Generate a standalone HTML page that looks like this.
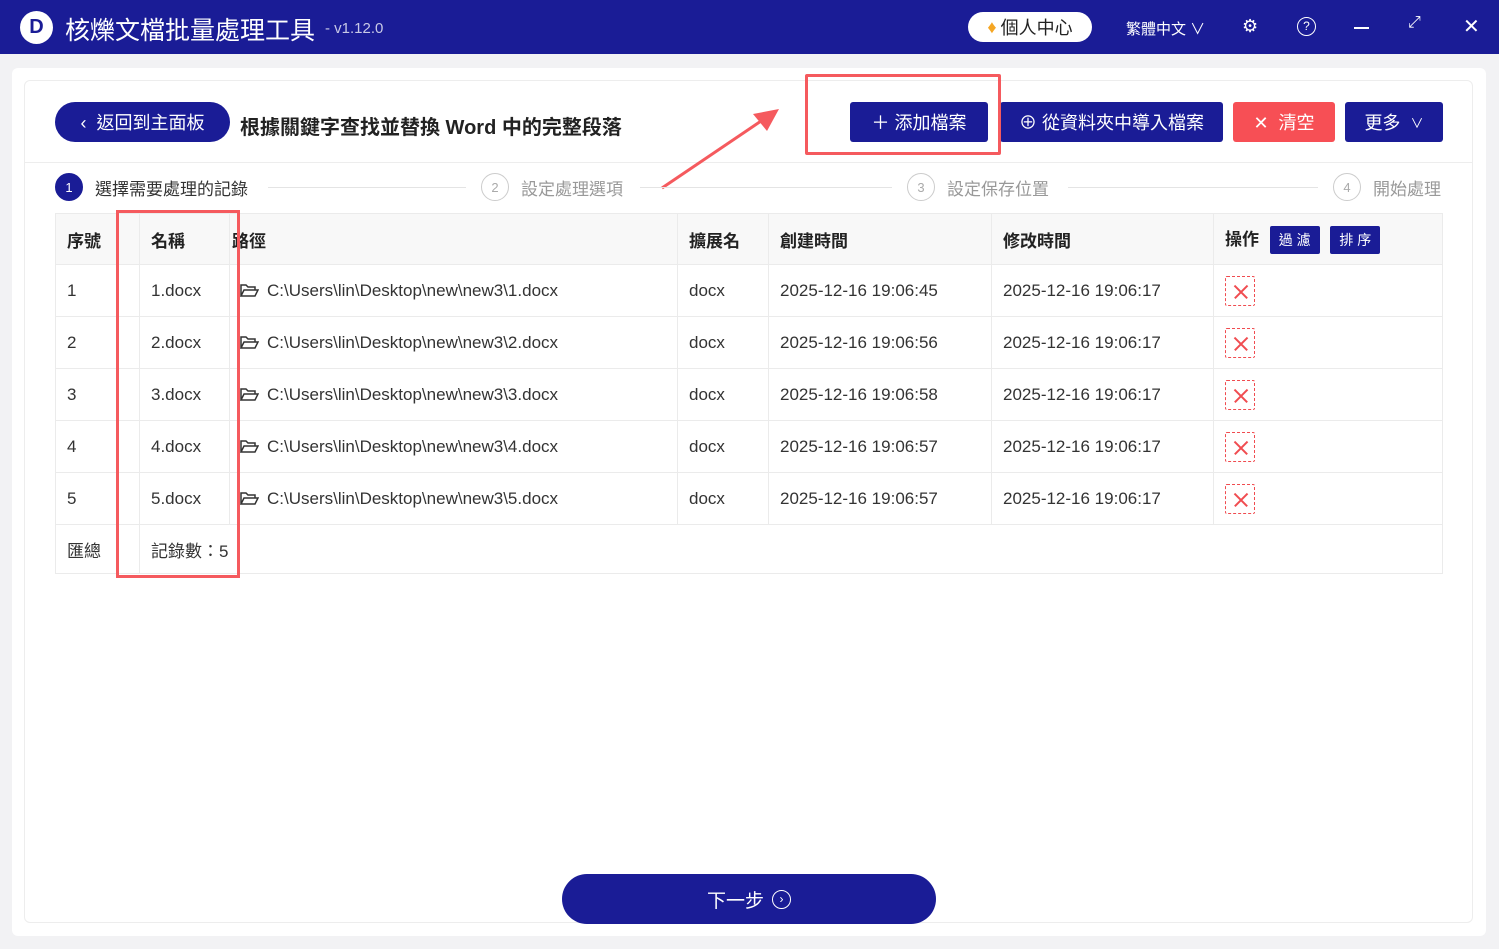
<!DOCTYPE html>
<html><head><meta charset="utf-8"><style>
*{margin:0;padding:0;box-sizing:border-box}
body{width:1499px;height:949px;background:#f2f2f4;font-family:"Liberation Sans","Noto Sans CJK TC",sans-serif;position:relative;overflow:hidden;color:#222}
.a{position:absolute}
.hdr{left:0;top:0;width:1499px;height:54px;background:#1a1c96}
.btn{position:absolute;height:40px;color:#fff;font-size:18px;display:flex;align-items:center;justify-content:center;border-radius:3px}
table{position:absolute;left:55px;top:213px;width:1388px;border-collapse:collapse;font-size:17px}
td{border:1px solid #ebebeb;padding-left:11px;height:52px;color:#333;vertical-align:middle}
tr.h td{background:#f8f8f8;font-weight:bold;height:51px;color:#222}
tr.f td{height:49px}
.x{display:inline-block;width:30px;height:30px;border:1px dashed #f04c50;border-radius:2px;position:relative;vertical-align:middle}
.x:before,.x:after{content:"";position:absolute;left:6px;top:14px;width:18px;height:1.5px;background:#f04c50;transform:rotate(45deg)}
.x:after{transform:rotate(-45deg)}
.step{position:absolute;top:173px;font-size:17px;color:#999;display:flex;align-items:center}
.c{width:28px;height:28px;border-radius:50%;border:1px solid #ccc;display:flex;align-items:center;justify-content:center;font-size:13px;color:#aaa;margin-right:12px}
.ln{position:absolute;top:187px;height:1px;background:#e4e4e4}
.p svg{vertical-align:-2px;margin-right:8px}
</style></head><body>
<div class="a hdr"></div>
<div class="a" style="left:20px;top:11px;width:33px;height:33px;border-radius:50%;background:#fff;display:flex;align-items:center;justify-content:center;color:#1a1c96;font-weight:bold;font-size:20px">D</div>
<div class="a" style="left:65px;top:11px;color:#fff;font-size:25px">核爍文檔批量處理工具</div>
<div class="a" style="left:325px;top:20px;color:#c8c9e6;font-size:15px">- v1.12.0</div>
<div class="a" style="left:968px;top:12px;width:124px;height:30px;border-radius:15px;background:#fff;display:flex;align-items:center;justify-content:center;font-size:18px;color:#222"><span style="color:#f5a623;margin-right:4px">♦</span>個人中心</div>
<div class="a" style="left:1126px;top:18px;color:#fff;font-size:15px">繁體中文 ∨</div>
<div class="a" style="left:1242px;top:16px;color:#fff;font-size:18px">⚙</div>
<div class="a" style="left:1297px;top:17px;width:19px;height:19px;border:1.5px solid #fff;border-radius:50%;color:#fff;font-size:12px;text-align:center;line-height:16px">?</div>
<div class="a" style="left:1354px;top:27px;width:15px;height:1.5px;background:#fff"></div>
<div class="a" style="left:1408px;top:14px;color:#fff;font-size:16px">⤢</div>
<div class="a" style="left:1463px;top:14px;color:#fff;font-size:20px">✕</div>

<div class="a" style="left:12px;top:68px;width:1474px;height:868px;background:#fff;border-radius:6px"></div>
<div class="a" style="left:24px;top:80px;width:1449px;height:843px;border:1px solid #ededed;border-radius:6px"></div>
<div class="a" style="left:25px;top:162px;width:1447px;height:1px;background:#ededed"></div>

<div class="btn" style="left:55px;top:102px;width:175px;border-radius:20px;background:#1a1c96">‹&nbsp;&nbsp;返回到主面板</div>
<div class="a" style="left:240px;top:111px;font-size:20px;font-weight:bold;color:#222">根據關鍵字查找並替換 Word 中的完整段落</div>
<div class="btn" style="left:850px;top:102px;width:138px;background:#1a1c96">＋&nbsp;添加檔案</div>
<div class="btn" style="left:1000px;top:102px;width:223px;background:#1a1c96">⊕&nbsp;從資料夾中導入檔案</div>
<div class="btn" style="left:1233px;top:102px;width:102px;background:#f74f55">✕&nbsp;&nbsp;清空</div>
<div class="btn" style="left:1345px;top:102px;width:98px;background:#1a1c96">更多&nbsp;&nbsp;<span style="font-size:13px">∨</span></div>
<div class="a" style="left:805px;top:74px;width:196px;height:81px;border:3px solid #f55a5e;border-radius:2px"></div>
<svg class="a" style="left:655px;top:100px" width="130" height="95"><line x1="7" y1="88" x2="115" y2="15" stroke="#f55a5e" stroke-width="3"/><polygon points="124,9 98,14 112,31" fill="#f55a5e"/></svg>

<div class="step" style="left:55px;color:#333"><div class="c" style="background:#1a1c96;border-color:#1a1c96;color:#fff">1</div>選擇需要處理的記錄</div>
<div class="ln" style="left:268px;width:198px"></div>
<div class="step" style="left:481px"><div class="c">2</div>設定處理選項</div>
<div class="ln" style="left:640px;width:252px"></div>
<div class="step" style="left:907px"><div class="c">3</div>設定保存位置</div>
<div class="ln" style="left:1068px;width:250px"></div>
<div class="step" style="left:1333px"><div class="c">4</div>開始處理</div>

<table>
<colgroup><col style="width:84px"><col style="width:90px"><col style="width:448px"><col style="width:91px"><col style="width:223px"><col style="width:222px"><col></colgroup>
<tr class="h"><td>序號</td><td>名稱</td><td style="padding-left:2px">路徑</td><td>擴展名</td><td>創建時間</td><td>修改時間</td><td>操作 <span style="display:inline-block;background:#1a1c96;color:#fff;font-size:14px;padding:4px 9px;border-radius:2px;margin-left:6px;font-weight:normal">過 濾</span> <span style="display:inline-block;background:#1a1c96;color:#fff;font-size:14px;padding:4px 9px;border-radius:2px;margin-left:6px;font-weight:normal">排 序</span></td></tr>
<tr><td>1</td><td>1.docx</td><td class="p" style="padding-left:10px"><svg width="19" height="15" viewBox="0 0 19 15"><path d="M1 13V2h5l2 2h7v3M1 13l3-6h14l-3 6z" fill="none" stroke="#333" stroke-width="1.5"/></svg>C:\Users\lin\Desktop\new\new3\1.docx</td><td>docx</td><td>2025-12-16 19:06:45</td><td>2025-12-16 19:06:17</td><td><span class="x"></span></td></tr>
<tr><td>2</td><td>2.docx</td><td class="p" style="padding-left:10px"><svg width="19" height="15" viewBox="0 0 19 15"><path d="M1 13V2h5l2 2h7v3M1 13l3-6h14l-3 6z" fill="none" stroke="#333" stroke-width="1.5"/></svg>C:\Users\lin\Desktop\new\new3\2.docx</td><td>docx</td><td>2025-12-16 19:06:56</td><td>2025-12-16 19:06:17</td><td><span class="x"></span></td></tr>
<tr><td>3</td><td>3.docx</td><td class="p" style="padding-left:10px"><svg width="19" height="15" viewBox="0 0 19 15"><path d="M1 13V2h5l2 2h7v3M1 13l3-6h14l-3 6z" fill="none" stroke="#333" stroke-width="1.5"/></svg>C:\Users\lin\Desktop\new\new3\3.docx</td><td>docx</td><td>2025-12-16 19:06:58</td><td>2025-12-16 19:06:17</td><td><span class="x"></span></td></tr>
<tr><td>4</td><td>4.docx</td><td class="p" style="padding-left:10px"><svg width="19" height="15" viewBox="0 0 19 15"><path d="M1 13V2h5l2 2h7v3M1 13l3-6h14l-3 6z" fill="none" stroke="#333" stroke-width="1.5"/></svg>C:\Users\lin\Desktop\new\new3\4.docx</td><td>docx</td><td>2025-12-16 19:06:57</td><td>2025-12-16 19:06:17</td><td><span class="x"></span></td></tr>
<tr><td>5</td><td>5.docx</td><td class="p" style="padding-left:10px"><svg width="19" height="15" viewBox="0 0 19 15"><path d="M1 13V2h5l2 2h7v3M1 13l3-6h14l-3 6z" fill="none" stroke="#333" stroke-width="1.5"/></svg>C:\Users\lin\Desktop\new\new3\5.docx</td><td>docx</td><td>2025-12-16 19:06:57</td><td>2025-12-16 19:06:17</td><td><span class="x"></span></td></tr>
<tr class="f"><td>匯總</td><td colspan="6">記錄數：5</td></tr>
</table>
<div class="a" style="left:116px;top:210px;width:124px;height:368px;border:3px solid #f55a5e"></div>

<div class="btn" style="left:562px;top:874px;width:374px;height:50px;border-radius:25px;background:#1a1c96;font-size:19px">下一步 <span style="display:inline-block;width:19px;height:19px;border:1.5px solid #fff;border-radius:50%;font-size:12px;line-height:16px;text-align:center;margin-left:8px">›</span></div>
</body></html>
